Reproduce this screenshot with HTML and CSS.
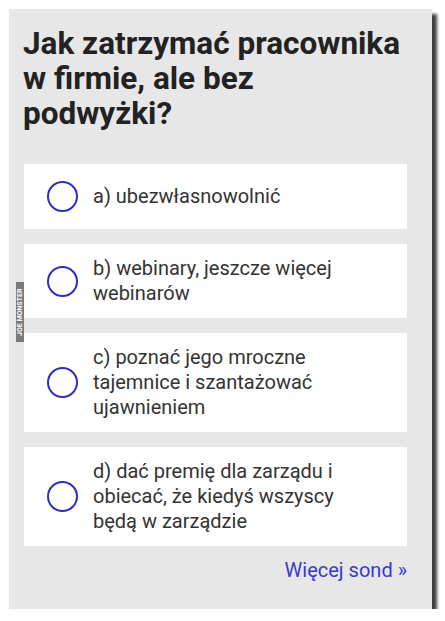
FILE: index.html
```html
<!DOCTYPE html>
<html lang="pl">
<head>
<meta charset="utf-8">
<link rel="stylesheet" href="styles.css">
</head>
<body>
<div class="panel">
  <h1 class="title">Jak zatrzymać pracownika w firmie, ale bez podwyżki?</h1>
  <div class="options">
    <div class="option"><span class="radio"></span><span class="label">a) ubezwłasnowolnić</span></div>
    <div class="option"><span class="radio"></span><span class="label">b) webinary, jeszcze więcej webinarów</span></div>
    <div class="option"><span class="radio"></span><span class="label">c) poznać jego mroczne tajemnice i szantażować ujawnieniem</span></div>
    <div class="option"><span class="radio"></span><span class="label">d) dać premię dla zarządu i obiecać, że kiedyś wszyscy będą w zarządzie</span></div>
  </div>
  <div class="more"><a class="more-link" href="#">Więcej sond »</a></div>
  <div class="watermark">JOE MONSTER</div>
</div>
</body>
</html>
```
FILE: styles.css
```css
html, body {
  margin: 0;
  padding: 0;
  background: #ffffff;
}
body {
  font-family: Roboto, "Liberation Sans", Arial, sans-serif;
}
.panel {
  position: relative;
  margin: 9px 0 0 9px;
  width: 423px;
  height: 600px;
  box-sizing: border-box;
  background: #e7e7e7;
  padding: 17px 25px 0 15px;
  box-shadow: 5px 5px 3px rgba(0, 0, 0, 0.75);
}
.title {
  margin: 0 0 33px -1px;
  width: 380px;
  font-size: 31.5px;
  line-height: 35px;
  font-weight: 700;
  color: #222222;
}
.options {
  display: flex;
  flex-direction: column;
  gap: 15px;
}
.option {
  display: flex;
  align-items: center;
  background: #ffffff;
  padding: 12px 30px 12px 23px;
  min-height: 41px;
}
.radio {
  flex: 0 0 auto;
  width: 27px;
  height: 27px;
  border: 2px solid #2d2dc4;
  border-radius: 50%;
  margin-right: 15px;
}
.label {
  font-size: 20px;
  line-height: 25px;
  color: #333333;
}
.more {
  display: flex;
  justify-content: flex-end;
  margin-top: 12px;
}
.more-link {
  font-size: 20px;
  line-height: 24px;
  color: #3a3ad0;
  text-decoration: none;
}
.watermark {
  position: absolute;
  left: 7px;
  top: 273px;
  width: 8px;
  height: 60px;
  background: #7a7a7a;
  color: #ffffff;
  font-size: 7px;
  font-weight: 700;
  writing-mode: vertical-rl;
  transform: rotate(180deg);
  text-align: center;
  line-height: 8px;
  white-space: nowrap;
}
```
